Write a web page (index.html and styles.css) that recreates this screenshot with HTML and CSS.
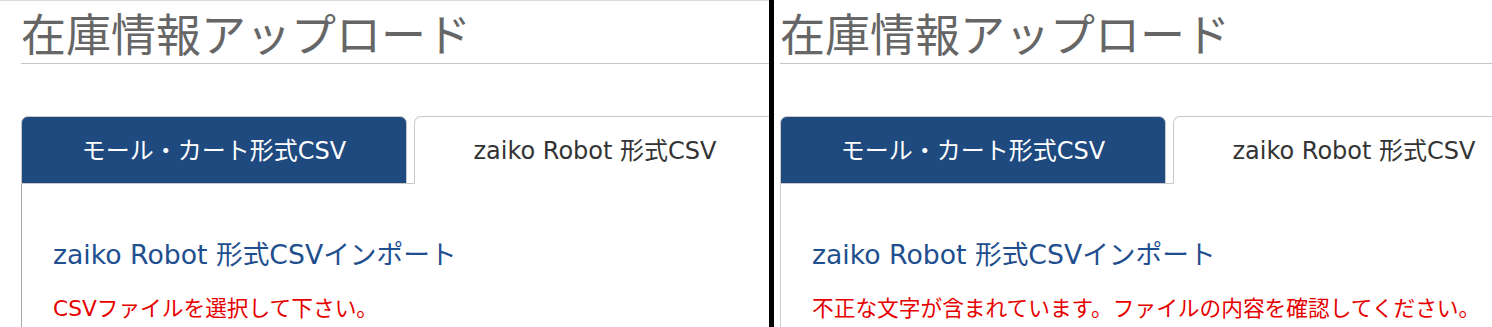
FILE: index.html
```html
<!DOCTYPE html>
<html lang="ja">
<head>
<meta charset="utf-8">
<title>在庫情報アップロード</title>
<link rel="stylesheet" href="styles.css">
</head>
<body>
<div class="screens">
  <section class="pane pane-left">
    <h1 class="page-title">在庫情報アップロード</h1>
    <div class="tabs">
      <div class="tab tab-mall">モール・カート形式CSV</div>
      <div class="tab tab-zaiko">zaiko Robot 形式CSV</div>
      <div class="tabs-rest"></div>
    </div>
    <div class="tab-body">
      <h2 class="import-title">zaiko Robot 形式CSVインポート</h2>
      <p class="error">CSVファイルを選択して下さい。</p>
    </div>
  </section>
  <div class="divider"></div>
  <section class="pane pane-right">
    <h1 class="page-title">在庫情報アップロード</h1>
    <div class="tabs">
      <div class="tab tab-mall">モール・カート形式CSV</div>
      <div class="tab tab-zaiko">zaiko Robot 形式CSV</div>
      <div class="tabs-rest"></div>
    </div>
    <div class="tab-body tab-body-light">
      <h2 class="import-title">zaiko Robot 形式CSVインポート</h2>
      <p class="error">不正な文字が含まれています。ファイルの内容を確認してください。</p>
    </div>
  </section>
</div>
</body>
</html>
```
FILE: styles.css
```css
html, body {
  margin: 0;
  padding: 0;
  background: #fff;
}
body {
  font-family: "DejaVu Sans", "Noto Sans CJK JP", sans-serif;
}
.screens {
  display: flex;
  height: 327px;
  overflow: hidden;
}
.pane {
  box-sizing: border-box;
  overflow: hidden;
  flex: none;
}
.pane-left {
  width: 769px;
  padding-left: 21px;
  border-top: 1px solid #dcdcdc;
}
.pane-right {
  flex: 1;
  padding-left: 6px;
  padding-top: 1px;
}
.divider {
  width: 5px;
  flex: none;
  background: #000;
}
.page-title {
  margin: 0;
  padding: 0;
  height: 62px;
  font-family: "Noto Sans CJK JP", sans-serif;
  font-size: 45px;
  line-height: 64px;
  font-weight: 400;
  color: #666;
  border-bottom: 1px solid #c4c4c4;
  white-space: nowrap;
}
.tabs {
  display: flex;
  margin-top: 52px;
  width: 1200px;
}
.tab {
  box-sizing: border-box;
  height: 68px;
  padding-bottom: 3px;
  display: flex;
  align-items: center;
  justify-content: center;
  font-size: 24px;
  white-space: nowrap;
  border: 1px solid #c8c8c8;
  border-radius: 7px 7px 0 0;
}
.tab-mall {
  width: 386px;
  background: #1e4a80;
  color: #fff;
}
.tab-zaiko {
  width: 362px;
  margin-left: 7px;
  background: #fff;
  color: #333;
  border-bottom-color: #fff;
  position: relative;
}
.tab-zaiko::before {
  content: "";
  position: absolute;
  left: -8px;
  bottom: -1px;
  width: 7px;
  height: 1px;
  background: #c8c8c8;
}
.tabs-rest {
  flex: 1;
}
.tab-body {
  border-left: 1px solid #a8a8a8;
  padding: 51px 0 0 31px;
  height: 200px;
}
.tab-body-light {
  border-left-color: #cfcfcf;
}
.import-title {
  margin: 0;
  font-size: 26.7px;
  line-height: 40px;
  font-weight: 400;
  color: #1f4f8f;
  white-space: nowrap;
}
.error {
  margin: 18px 0 0;
  font-size: 21.7px;
  line-height: 32px;
  color: #e60000;
  white-space: nowrap;
}
```
